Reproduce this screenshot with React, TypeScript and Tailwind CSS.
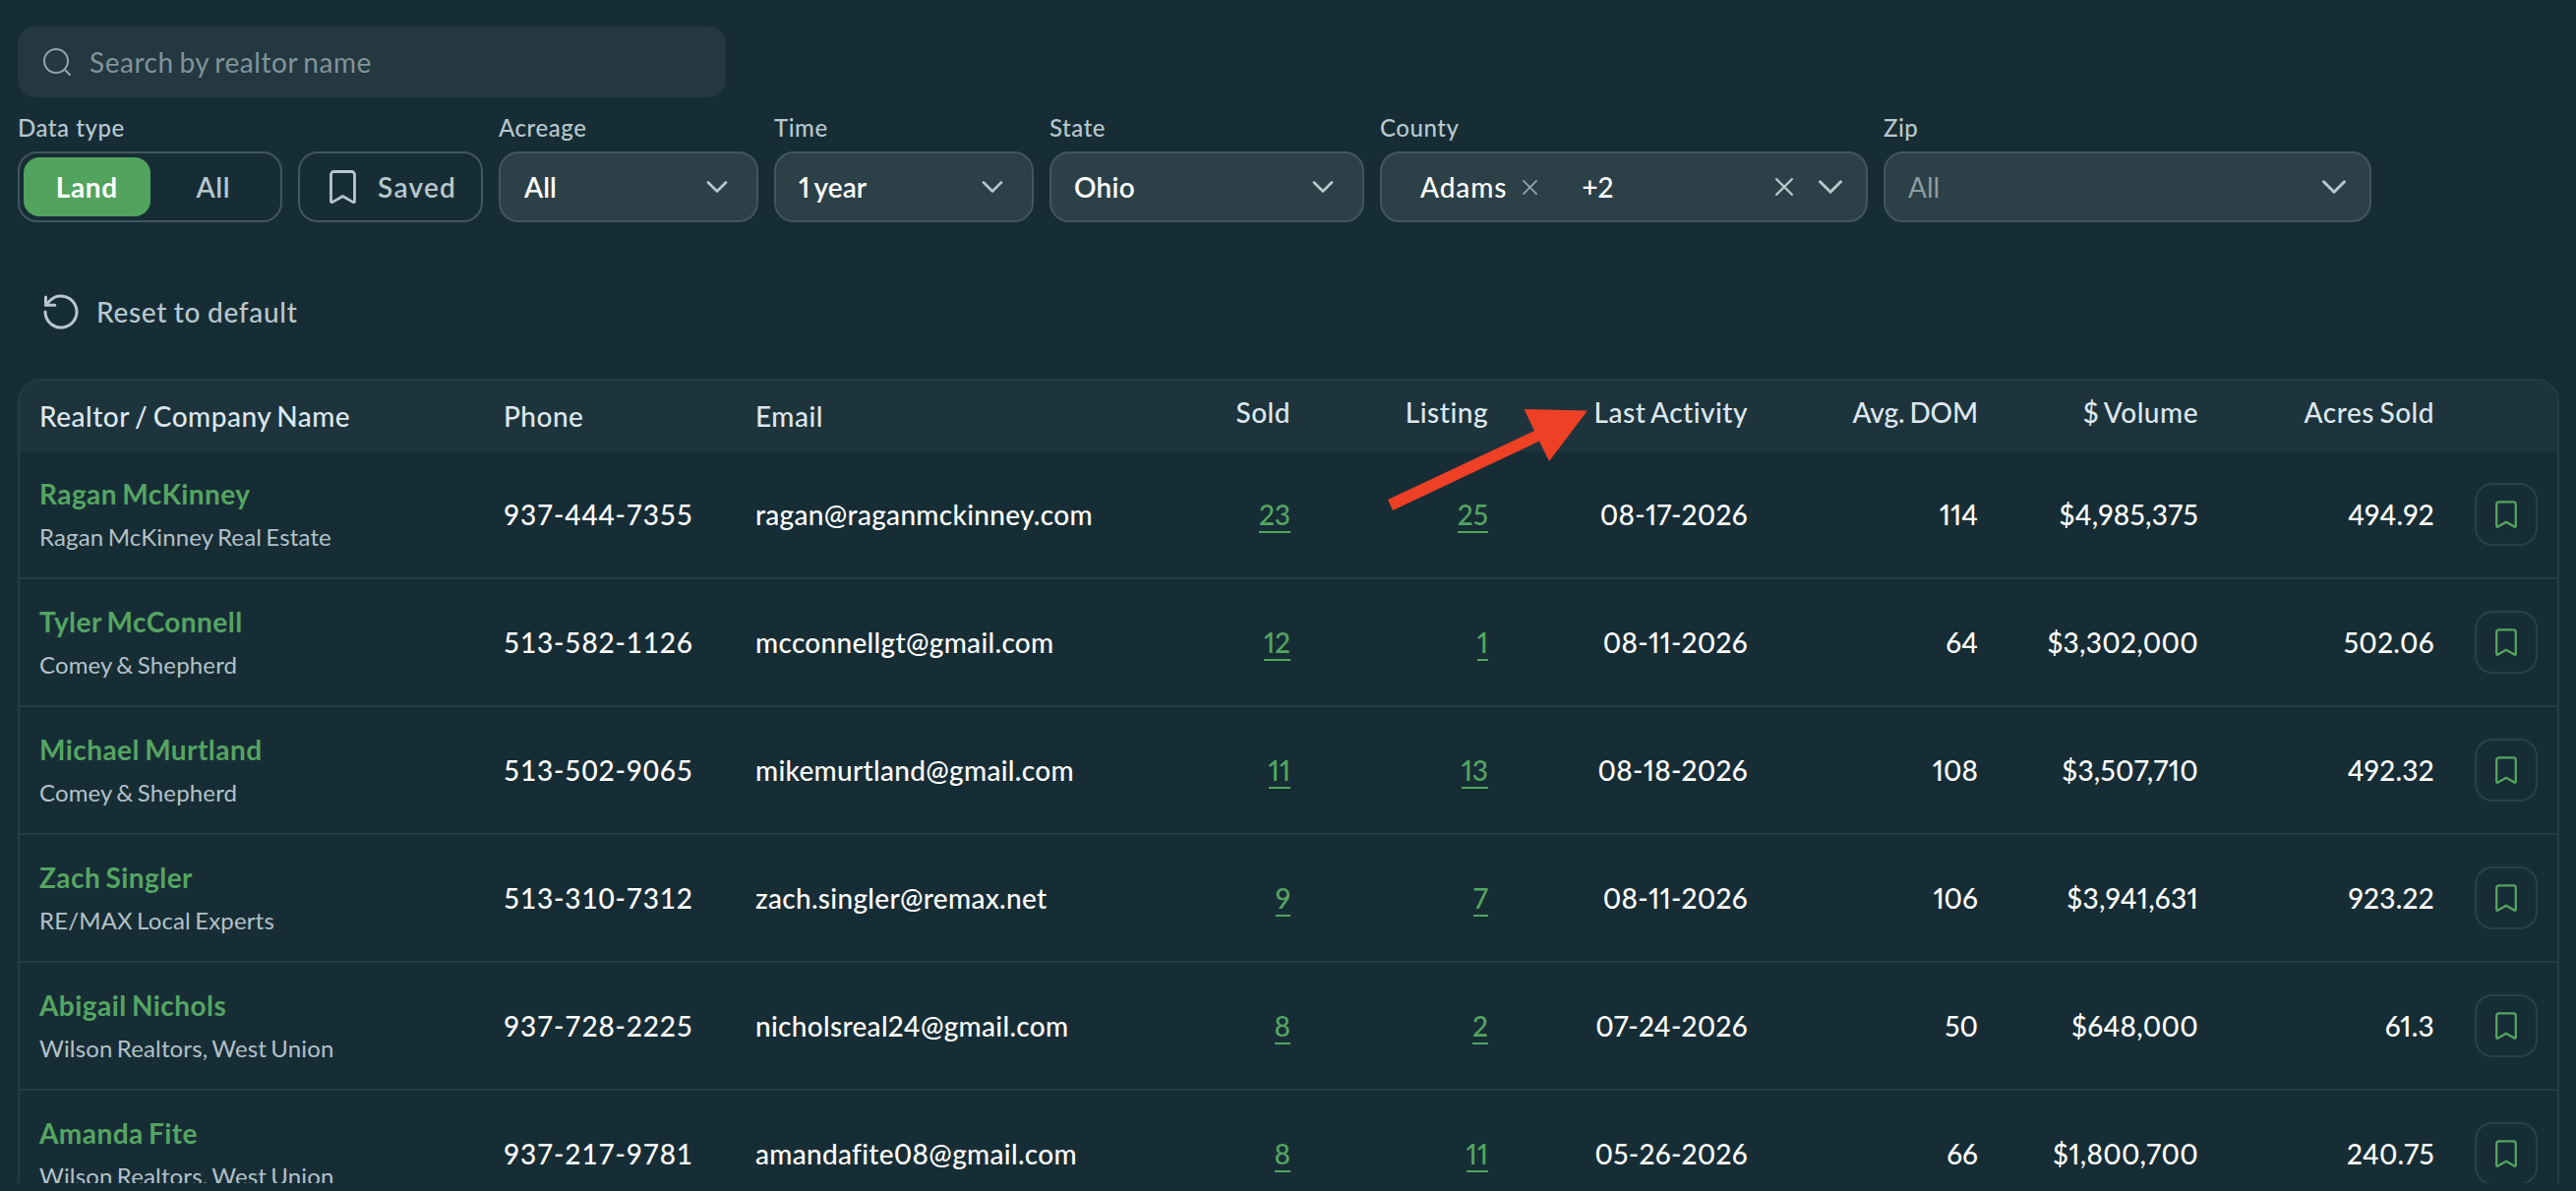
import React, { useState } from "react";

type Realtor = {
  name: string;
  company: string;
  phone: string;
  email: string;
  sold: number;
  listing: number;
  lastActivity: string;
  avgDom: number;
  volume: string;
  acres: string;
};

const realtors: Realtor[] = [
  {
    name: "Ragan McKinney",
    company: "Ragan McKinney Real Estate",
    phone: "937-444-7355",
    email: "ragan@raganmckinney.com",
    sold: 23,
    listing: 25,
    lastActivity: "08-17-2026",
    avgDom: 114,
    volume: "$4,985,375",
    acres: "494.92",
  },
  {
    name: "Tyler McConnell",
    company: "Comey & Shepherd",
    phone: "513-582-1126",
    email: "mcconnellgt@gmail.com",
    sold: 12,
    listing: 1,
    lastActivity: "08-11-2026",
    avgDom: 64,
    volume: "$3,302,000",
    acres: "502.06",
  },
  {
    name: "Michael Murtland",
    company: "Comey & Shepherd",
    phone: "513-502-9065",
    email: "mikemurtland@gmail.com",
    sold: 11,
    listing: 13,
    lastActivity: "08-18-2026",
    avgDom: 108,
    volume: "$3,507,710",
    acres: "492.32",
  },
  {
    name: "Zach Singler",
    company: "RE/MAX Local Experts",
    phone: "513-310-7312",
    email: "zach.singler@remax.net",
    sold: 9,
    listing: 7,
    lastActivity: "08-11-2026",
    avgDom: 106,
    volume: "$3,941,631",
    acres: "923.22",
  },
  {
    name: "Abigail Nichols",
    company: "Wilson Realtors, West Union",
    phone: "937-728-2225",
    email: "nicholsreal24@gmail.com",
    sold: 8,
    listing: 2,
    lastActivity: "07-24-2026",
    avgDom: 50,
    volume: "$648,000",
    acres: "61.3",
  },
  {
    name: "Amanda Fite",
    company: "Wilson Realtors, West Union",
    phone: "937-217-9781",
    email: "amandafite08@gmail.com",
    sold: 8,
    listing: 11,
    lastActivity: "05-26-2026",
    avgDom: 66,
    volume: "$1,800,700",
    acres: "240.75",
  },
];

const gridCols =
  "grid grid-cols-[472px_256px_424px_120px_201px_264px_234px_224px_240px_105px] px-5";

// Icons
const SearchIcon = () => (
  <svg viewBox="0 0 28 28" className="size-7" fill="none" stroke="currentColor" strokeWidth="2" strokeLinecap="round">
    <circle cx="13" cy="13" r="12" />
    <path d="M21.8 21.8 27 27" />
  </svg>
);

const BookmarkIcon = ({ className }: { className: string }) => (
  <svg viewBox="0 0 27 34" className={className} fill="none" stroke="currentColor" strokeWidth="2.8" strokeLinejoin="round">
    <path d="M1.5 4.5a3 3 0 0 1 3-3h18a3 3 0 0 1 3 3v27c0 1-.9 1.4-1.8 .9L13.5 26.5 3.3 32.4c-.9 .5-1.8 .1-1.8-.9z" />
  </svg>
);

const ResetIcon = () => (
  <svg viewBox="0 0 36 36" className="size-9" fill="none" stroke="currentColor" strokeWidth="3" strokeLinecap="round" strokeLinejoin="round">
    <path d="M2 18A16 16 0 1 0 6.7 6.7L2.5 11" />
    <path d="M2.5 3v8.3h9.3" />
  </svg>
);

const Chevron = ({ className = "h-3 w-[22px]" }: { className?: string }) => (
  <svg viewBox="0 0 22 12" className={className} fill="none" stroke="currentColor" strokeWidth="2.6" strokeLinecap="round" strokeLinejoin="round">
    <path d="m2 1.5 9 9 9-9" />
  </svg>
);

const Cross = ({ className }: { className: string }) => (
  <svg viewBox="0 0 16 16" className={className} fill="none" stroke="currentColor" strokeWidth="1.9" strokeLinecap="round">
    <path d="m1 1 14 14M15 1 1 15" />
  </svg>
);

const Field = ({ label, children }: { label: string; children: React.ReactNode }) => (
  <div className="flex flex-col gap-2">
    <span className="h-8 text-2xl leading-8 font-medium tracking-[0.55px] text-[#b7c7cd]">{label}</span>
    {children}
  </div>
);

const selectBox =
  "flex h-[72px] items-center rounded-[20px] border-2 border-[#42565d] bg-[#2c4047] font-medium";

const App: React.FC = () => {
  const [dataType, setDataType] = useState("Land");

  return (
    <div className="min-h-[1211px] w-full bg-[#172d35] font-['Lato','Open_Sans',sans-serif] text-[28px] leading-10 text-white proportional-nums">
      <div className="relative h-[1203px] overflow-hidden px-[18px] pt-[27px]">
        {/* Search */}
        <div className="flex h-[72px] w-[720px] items-center gap-[19px] rounded-[18px] bg-[#233840] pl-[26px] text-[#94a4aa]">
          <SearchIcon />
          <span className="tracking-[0.55px] text-[#82939a] [word-spacing:-2px]">Search by realtor name</span>
        </div>

        {/* Filters */}
        <div className="mt-[15px] flex items-end gap-4">
          <Field label="Data type">
            <div className="flex h-[72px] w-[269px] rounded-[20px] border-2 border-[#42565d] p-1">
              {["Land", "All"].map((type) => (
                <button
                  key={type}
                  onClick={() => setDataType(type)}
                  className={
                    "flex h-[60px] w-[129px] items-center justify-center rounded-2xl tracking-[0.6px] " +
                    (dataType === type ? "bg-[#52a35d] font-bold text-white" : "font-semibold text-[#b7c7cd]")
                  }
                >
                  {type}
                </button>
              ))}
            </div>
          </Field>
          <button className="flex h-[72px] w-[188px] items-center rounded-[20px] border-2 border-[#42565d] pl-[30px] font-semibold tracking-[1.3px] text-[#b7c7cd]">
            <BookmarkIcon className="mr-[22px] h-[34px] w-[27px]" />
            Saved
          </button>
          <Field label="Acreage">
            <div className={selectBox + " w-[264px] justify-between pr-[29px] pl-6"}>
              <span className="font-semibold">All</span>
              <span className="text-[#b7c7cd]"><Chevron /></span>
            </div>
          </Field>
          <Field label="Time">
            <div className={selectBox + " w-[264px] justify-between pr-[29px] pl-[23px]"}>
              <span className="font-semibold [word-spacing:-2px]">1 year</span>
              <span className="text-[#b7c7cd]"><Chevron /></span>
            </div>
          </Field>
          <Field label="State">
            <div className={selectBox + " w-[320px] justify-between pr-[29px] pl-[23px]"}>
              <span className="font-semibold tracking-[0.3px]">Ohio</span>
              <span className="text-[#b7c7cd]"><Chevron /></span>
            </div>
          </Field>
          <Field label="County">
            <div className={selectBox + " w-[496px] pr-[23px] pl-[39px]"}>
              <span className="tracking-[0.9px]">Adams</span>
              <span className="ml-4 text-[#94a4aa]"><Cross className="size-[15px]" /></span>
              <span className="ml-[45px]">+2</span>
              <span className="ml-auto flex items-center gap-[25px] text-[#b7c7cd]">
                <Cross className="size-[18px]" />
                <Chevron className="h-[14px] w-[26px]" />
              </span>
            </div>
          </Field>
          <Field label="Zip">
            <div className={selectBox + " w-[496px] justify-between pr-[23px] pl-[23px]"}>
              <span className="font-normal text-[#8c9ca2]">All</span>
              <span className="text-[#b7c7cd]"><Chevron className="h-[14px] w-[26px]" /></span>
            </div>
          </Field>
        </div>

        {/* Reset */}
        <button className="mt-[59px] mb-9 flex h-16 items-center gap-[18px] pl-[26px] font-medium tracking-[0.7px] text-[#b7c7cd] [word-spacing:-1px]">
          <ResetIcon />
          Reset to default
        </button>

        {/* Table */}
        <div className="w-[2584px] overflow-hidden rounded-t-3xl border-2 border-[#263c44]">
          <div className={gridCols + " h-[72px] items-center bg-[#1e343c] pb-px font-medium tracking-[0.5px] text-[#dde7ee] [word-spacing:-2px]"}>
            <span>Realtor / Company Name</span>
            <span>Phone</span>
            <span>Email</span>
            <span className="pb-2 text-right">Sold</span>
            <span className="pb-2 text-right">Listing</span>
            <span className="pb-2 text-right">Last Activity</span>
            <span className="pb-2 text-right tracking-[-0.1px]">Avg. DOM</span>
            <span className="pb-2 text-right">$ Volume</span>
            <span className="pb-2 text-right">Acres Sold</span>
          </div>
          {realtors.map((r) => (
            <div key={r.name} className={gridCols + " h-[130px] items-center border-b-2 border-[#263c44] pb-px font-medium"}>
              <div className="pt-[3px] leading-[43px]">
                <div className="font-bold tracking-[0.45px] text-[#55a562] [word-spacing:-2px]">{r.name}</div>
                <div className="text-2xl leading-[43px] font-normal tracking-[0.15px] text-[#b3c1c8] [word-spacing:-2px]">{r.company}</div>
              </div>
              <span className="tracking-[0.8px] tabular-nums">{r.phone}</span>
              <span className="tracking-[0.3px]">{r.email}</span>
              {[r.sold, r.listing].map((count, i) => (
                <span key={i} className="text-right">
                  <a className="inline-block h-[39px] border-b-2 border-[#55a562] text-[#55a562]">{count}</a>
                </span>
              ))}
              <span className="text-right tracking-[0.3px]">{r.lastActivity}</span>
              <span className="text-right">{r.avgDom}</span>
              <span className="text-right tracking-[0.3px]">{r.volume}</span>
              <span className="text-right tracking-[0.3px]">{r.acres}</span>
              <button className="flex size-16 items-center justify-center justify-self-end rounded-[18px] border-2 border-[#2a4048] text-[#55a562]">
                <BookmarkIcon className="h-7 w-[22px]" />
              </button>
            </div>
          ))}
        </div>

        {/* Arrow pointing at the Last Activity column */}
        <svg className="absolute top-[410px] left-[1400px] h-[120px] w-[220px]" viewBox="0 0 220 120" fill="#ee4024">
          <path d="M11 98 160 28 149.500 6 214 7.500 175 59 165 38.500 16 109z" />
        </svg>
      </div>
    </div>
  );
};

export default App;
